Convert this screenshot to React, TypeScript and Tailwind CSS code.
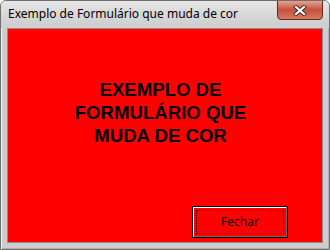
import React from 'react';

const CloseGlyph: React.FC = () => (
  <svg width="14" height="11" viewBox="0 0 14 11">
    <path d="M3 2 L11 9 M11 2 L3 9" stroke="#3b2a2a" strokeWidth="4" strokeLinecap="square" />
    <path d="M3 2 L11 9 M11 2 L3 9" stroke="#ffffff" strokeWidth="2.2" strokeLinecap="square" />
  </svg>
);

const App: React.FC = () => {
  return (
    <div className="w-[330px] h-[250px] flex flex-col bg-[#cdcdcd] border border-[#6f6f6f] rounded-t-[6px] overflow-hidden shadow-[inset_1px_1px_0_#f2f2f2,inset_-1px_-1px_0_#b0b0b0]" style={{ fontFamily: '"Noto Sans", sans-serif' }}>
      <div className="h-[27px] flex items-start justify-between bg-gradient-to-b from-[#e6e6e6] via-[#d8d8d8] to-[#cdcdcd] shrink-0">
        <span className="pl-[7px] pt-[5px] text-[12px] leading-[15px] text-black">Exemplo de Formulário que muda de cor</span>
        <button className="mr-[6px] -mt-px w-[46px] h-[20px] flex items-center justify-center rounded-b-[4px] border border-[#5c2c22] bg-gradient-to-b from-[#e7a28f] via-[#c4503d] to-[#d97a62]">
          <CloseGlyph />
        </button>
      </div>
      <div className="flex-1 mx-[6px] mb-[6px] border border-[#8d8d8d] bg-[#ff0000] flex flex-col">
        <h1 className="pt-[49px] pr-[9px] text-center font-bold text-[18.6px] leading-[23px] text-black" style={{ fontFamily: '"Liberation Sans", Arial, sans-serif' }}>
          EXEMPLO DE<br />FORMULÁRIO QUE<br />MUDA DE COR
        </h1>
        <div className="mt-auto mb-[4px] mr-[34px] flex justify-end">
          <button className="w-[96px] h-[32px] border border-black bg-[#ff0000] p-0">
            <div className="w-full h-full border border-t-white border-l-white border-r-[#696969] border-b-[#696969] p-[2px]">
              <div className="w-full h-full border border-dotted border-black flex items-center justify-center text-[12px] text-black">
                Fechar
              </div>
            </div>
          </button>
        </div>
      </div>
    </div>
  );
};

export default App;
